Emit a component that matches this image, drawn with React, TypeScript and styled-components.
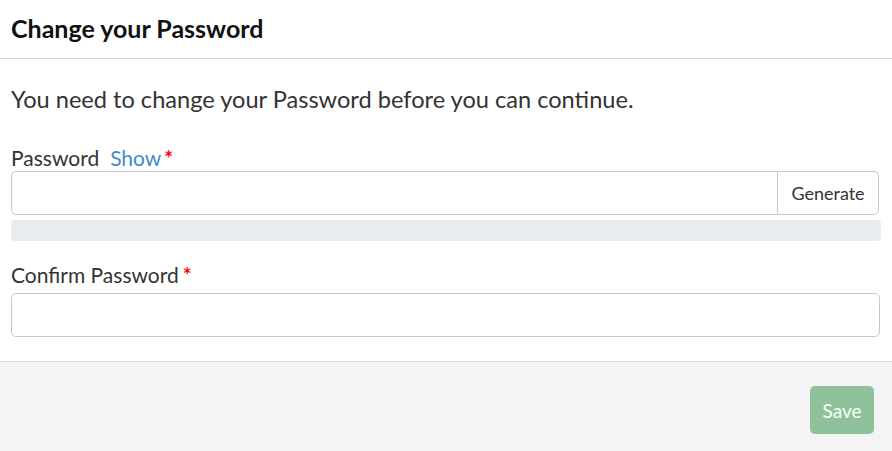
import React from "react";
import styled, { createGlobalStyle } from "styled-components";

const Global = createGlobalStyle`
  html, body { margin: 0; padding: 0; background: #fff; }
  body { font-family: Lato, "Open Sans", sans-serif; color: #333; }
  * { box-sizing: border-box; }
`;

const Modal = styled.div`
  width: 892px;
  height: 451px;
  display: flex;
  flex-direction: column;
  background: #fff;
`;

const Header = styled.div`
  height: 59px;
  padding: 13px 11px 0;
  border-bottom: 1px solid #d4d4d4;
`;

const Title = styled.h4`
  margin: 0;
  font-size: 25px;
  font-weight: 700;
  line-height: 30px;
  color: #111;
`;

const Body = styled.div`
  flex: 1;
  padding: 24px 11px 0;
  display: flex;
  flex-direction: column;
`;

const Lead = styled.p`
  margin: 0 0 30px;
  font-size: 23.6px;
  line-height: 32px;
  color: #333;
`;

const Label = styled.label<{ $mb?: number }>`
  display: flex;
  align-items: baseline;
  font-size: 21px;
  line-height: 26px;
  color: #333;
  margin-bottom: ${(p) => p.$mb ?? 0}px;
`;

const ShowLink = styled.a`
  color: #428bca;
  margin-left: 11px;
  cursor: pointer;
`;

const Req = styled.span<{ $gap?: number }>`
  color: #f00;
  margin-left: ${(p) => p.$gap ?? 3}px;
  font-weight: 700;
`;

const Group = styled.div<{ $mr?: number }>`
  display: flex;
  height: 44px;
  margin-right: ${(p) => p.$mr ?? 2}px;
`;

const Input = styled.input<{ $joined?: boolean }>`
  flex: 1;
  height: 100%;
  border: 1px solid #c8c8c8;
  border-radius: ${(p) => (p.$joined ? "5px 0 0 5px" : "5px")};
  font-family: inherit;
  font-size: 16px;
  padding: 0 12px;
  outline: none;
`;

const Addon = styled.button`
  width: 101px;
  height: 100%;
  border: 1px solid #c8c8c8;
  border-left: none;
  border-radius: 0 5px 5px 0;
  background: #fff;
  font-family: inherit;
  font-size: 18px;
  color: #333;
  padding: 0;
`;

const Progress = styled.div`
  height: 21px;
  margin-top: 5px;
  background: #e9ecef;
  border-radius: 4px;
`;

const Field = styled.div<{ $mt?: number }>`
  margin-top: ${(p) => p.$mt ?? 0}px;
`;

const Footer = styled.div`
  height: 90px;
  background: #f4f4f4;
  border-top: 1px solid #dedede;
  display: flex;
  justify-content: flex-end;
  align-items: flex-start;
  padding: 24px 18px 0 0;
`;

const SaveButton = styled.button`
  width: 64px;
  height: 48px;
  border: none;
  border-radius: 5px;
  background: #8fc29a;
  color: #fff;
  font-family: inherit;
  font-size: 19px;
`;

export default function App() {
  return (
    <>
      <Global />
      <Modal>
        <Header>
          <Title>Change your Password</Title>
        </Header>
        <Body>
          <Lead>You need to change your Password before you can continue.</Lead>
          <Field>
            <Label>
              Password<ShowLink>Show</ShowLink>
              <Req>*</Req>
            </Label>
            <Group $mr={2}>
              <Input type="password" $joined />
              <Addon>Generate</Addon>
            </Group>
            <Progress />
          </Field>
          <Field $mt={21}>
            <Label $mb={5}>
              Confirm Password<Req $gap={4}>*</Req>
            </Label>
            <Group $mr={1}>
              <Input type="password" />
            </Group>
          </Field>
        </Body>
        <Footer>
          <SaveButton disabled>Save</SaveButton>
        </Footer>
      </Modal>
    </>
  );
}
